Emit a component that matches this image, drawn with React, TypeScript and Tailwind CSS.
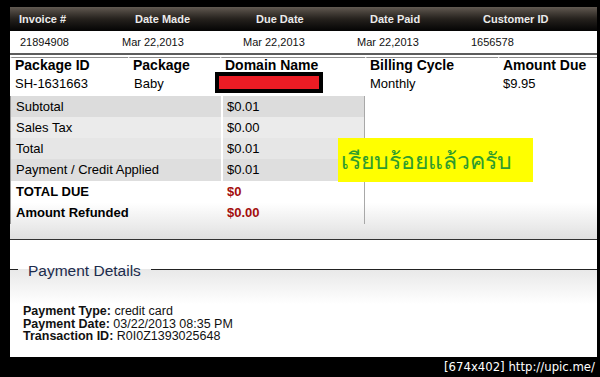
import React from "react"

const invoiceHead = ["Invoice #", "Date Made", "Due Date", "Date Paid", "Customer ID"]
const invoiceRow = ["21894908", "Mar 22,2013", "Mar 22,2013", "Mar 22,2013", "1656578"]

const pkgHead = ["Package ID", "Package", "Domain Name", "Billing Cycle", "Amount Due"]

// summary lines under the package row
const totals = [
  { label: "Subtotal", value: "$0.01", bg: "bg-[#dcdcdc]" },
  { label: "Sales Tax", value: "$0.00", bg: "bg-[#ebebeb]" },
  { label: "Total", value: "$0.01", bg: "bg-[#e6e6e6]" },
  { label: "Payment / Credit Applied", value: "$0.01", bg: "bg-[#dedede]" },
]

export default function App() {
  return (
    <div className="w-[600px] h-[377px] bg-black flex flex-col font-['Liberation_Sans',Arial,sans-serif] text-black overflow-hidden">
      <div className="pt-[7px] pl-[10px] pr-[3px]">
        <div className="relative h-[350px] bg-white flex flex-col">
          {/* invoice header bar */}
          <div className="h-[24px] bg-linear-to-b from-[#625a52] via-[#25211d] to-[#050505] grid grid-cols-[116px_121px_114px_113px_1fr] pl-[9px] items-center">
            {invoiceHead.map((h) => (
              <div key={h} className="text-[11px] font-bold text-[#ebebeb]">
                {h}
              </div>
            ))}
          </div>
          <div className="h-[22px] grid grid-cols-[102px_121px_114px_114px_1fr] pl-[10px] items-center">
            {invoiceRow.map((v, i) => (
              <div key={i} className="text-[11px] text-[#111]">
                {v}
              </div>
            ))}
          </div>
          <div className="h-[2px] bg-[#5c5c5c]" />

          {/* package table */}
          <div className="mt-[2px] h-[182px] bg-linear-to-b from-white from-80% to-[#e0e0e0]">
            <div className="grid grid-cols-[118px_92px_145px_133px_1fr] h-[15px]">
              {pkgHead.map((h) => (
                <div
                  key={h}
                  className="border-t border-t-[#8c8c8c] border-l-2 border-l-white pl-[3px] text-[14px] leading-[14px] font-bold"
                >
                  {h}
                </div>
              ))}
            </div>
            <div className="grid grid-cols-[118px_92px_145px_133px_1fr] h-[24px] items-center text-[13px]">
              <div className="pl-[5px]">SH-1631663</div>
              <div className="pl-[6px]">Baby</div>
              <div className="relative h-full">
                <div className="absolute left-[-5px] top-0 w-[108px] h-[21px] border-4 border-black bg-[#ec1c24]" />
              </div>
              <div className="pl-[5px]">Monthly</div>
              <div className="pl-[5px]">$9.95</div>
            </div>

            <div className="w-[355px] border-l border-l-[#9a9a9a] border-r border-r-[#a8a8a8] text-[13px]">
              {totals.map((t, i) => (
                <div key={t.label} className={`grid grid-cols-[210px_1fr] ${i === 3 ? "h-[22px]" : "h-[21px]"}`}>
                  <div className={`${t.bg} pl-[5px] flex items-center`}>{t.label}</div>
                  <div className={`${t.bg} border-l-2 border-l-white pl-[4px] flex items-center`}>{t.value}</div>
                </div>
              ))}
              <div className="grid grid-cols-[210px_1fr] h-[21px] font-bold">
                <div className="pl-[5px] flex items-center">TOTAL DUE</div>
                <div className="pl-[6px] flex items-center text-[#a30d0d]">$0</div>
              </div>
              <div className="grid grid-cols-[210px_1fr] h-[22px] font-bold">
                <div className="pl-[5px] flex items-center">Amount Refunded</div>
                <div className="pl-[6px] flex items-center text-[#a30d0d]">$0.00</div>
              </div>
            </div>
          </div>

          <div className="h-px bg-[#333]" />
          <div className="h-[29px]" />

          {/* payment details fieldset */}
          <div className="flex-1 bg-linear-to-b from-[#e8e8e8] to-white to-40%">
            <div className="flex h-[18px] -mt-[7px]">
              <div className="w-[8px] h-px mt-[7px] bg-[#222]" />
              <div className="px-[10px] text-[15.5px] leading-[18px] text-[#1c2b4c]">Payment Details</div>
              <div className="flex-1 h-px mt-[7px] bg-[#222]" />
            </div>
            <div className="pt-[25px] pl-[13px] text-[12.5px] leading-[12.5px] text-[#111]">
              <div>
                <b>Payment Type:</b> credit card
              </div>
              <div>
                <b>Payment Date:</b> 03/22/2013 08:35 PM
              </div>
              <div>
                <b>Transaction ID:</b> R0I0Z1393025648
              </div>
            </div>
          </div>

          {/* note pasted over the table */}
          <div className="absolute left-[328px] top-[131px] w-[195px] h-[44px] bg-[#ffff00] flex items-center pl-[3px]">
            <span className="text-[23px] leading-none text-[#2e9c2e] font-['Noto_Sans',sans-serif]">
              เรียบร้อยแล้วครับ
            </span>
          </div>
        </div>
      </div>
      <div className="h-[20px] flex items-center justify-end pr-[5px] text-white text-[13px] font-['DejaVu_Sans_Condensed','DejaVu_Sans',sans-serif]">
        [674x402] http://upic.me/
      </div>
    </div>
  )
}
